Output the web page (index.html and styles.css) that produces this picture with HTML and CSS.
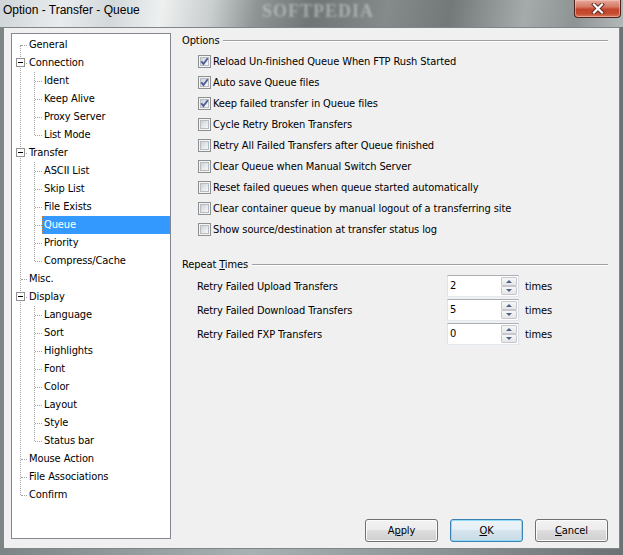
FILE: index.html
```html
<!DOCTYPE html>
<html>
<head>
<meta charset="utf-8">
<title>Option - Transfer - Queue</title>
<link rel="stylesheet" href="styles.css">
</head>
<body>
<div class="window">
  <div class="titlebar">
    <span class="title">Option - Transfer - Queue</span>
    <span class="watermark">SOFTPEDIA</span>
    <span class="close">
      <svg width="14" height="11" viewBox="0 0 14 11"><path d="M3 1.5 L11 9.5 M11 1.5 L3 9.5" stroke="#5a2a22" stroke-width="4" stroke-linecap="square"/><path d="M3 1.5 L11 9.5 M11 1.5 L3 9.5" stroke="#ffffff" stroke-width="2.2" stroke-linecap="square"/></svg>
    </span>
  </div>
  <div class="client">
    <div class="tree">
      <ul class="root">
        <li><span class="row">General</span></li>
        <li><span class="exp"></span><span class="row">Connection</span>
          <ul class="children">
            <li><span class="row">Ident</span></li>
            <li><span class="row">Keep Alive</span></li>
            <li><span class="row">Proxy Server</span></li>
            <li><span class="row">List Mode</span></li>
          </ul>
        </li>
        <li><span class="exp"></span><span class="row">Transfer</span>
          <ul class="children">
            <li><span class="row">ASCII List</span></li>
            <li><span class="row">Skip List</span></li>
            <li><span class="row">File Exists</span></li>
            <li><span class="row selected">Queue</span></li>
            <li><span class="row">Priority</span></li>
            <li><span class="row">Compress/Cache</span></li>
          </ul>
        </li>
        <li><span class="row">Misc.</span></li>
        <li><span class="exp"></span><span class="row">Display</span>
          <ul class="children">
            <li><span class="row">Language</span></li>
            <li><span class="row">Sort</span></li>
            <li><span class="row">Highlights</span></li>
            <li><span class="row">Font</span></li>
            <li><span class="row">Color</span></li>
            <li><span class="row">Layout</span></li>
            <li><span class="row">Style</span></li>
            <li><span class="row">Status bar</span></li>
          </ul>
        </li>
        <li><span class="row">Mouse Action</span></li>
        <li><span class="row">File Associations</span></li>
        <li><span class="row">Confirm</span></li>
      </ul>
    </div>
    <div class="pane">
      <div class="group-head"><span>Options</span></div>
      <div class="checks">
        <div class="check"><span class="box checked"><svg width="13" height="13" viewBox="0 0 13 13"><path d="M3.3 6.2 L5.4 9 L9.8 3.2" fill="none" stroke="#4b5c95" stroke-width="1.9"/></svg></span><span>Reload Un-finished Queue When FTP Rush Started</span></div>
        <div class="check"><span class="box checked"><svg width="13" height="13" viewBox="0 0 13 13"><path d="M3.3 6.2 L5.4 9 L9.8 3.2" fill="none" stroke="#4b5c95" stroke-width="1.9"/></svg></span><span>Auto save Queue files</span></div>
        <div class="check"><span class="box checked"><svg width="13" height="13" viewBox="0 0 13 13"><path d="M3.3 6.2 L5.4 9 L9.8 3.2" fill="none" stroke="#4b5c95" stroke-width="1.9"/></svg></span><span>Keep failed transfer in Queue files</span></div>
        <div class="check"><span class="box"></span><span>Cycle Retry Broken Transfers</span></div>
        <div class="check"><span class="box"></span><span>Retry All Failed Transfers after Queue finished</span></div>
        <div class="check"><span class="box"></span><span>Clear Queue when Manual Switch Server</span></div>
        <div class="check"><span class="box"></span><span>Reset failed queues when queue started automatically</span></div>
        <div class="check"><span class="box"></span><span>Clear container queue by manual logout of a transferring site</span></div>
        <div class="check"><span class="box"></span><span>Show source/destination at transfer status log</span></div>
      </div>
      <div class="group-head repeat"><span>Repeat <u>T</u>imes</span></div>
      <div class="spins">
        <div class="spin-row"><span class="spin-label">Retry Failed Upload Transfers</span><span class="spin"><span class="val">2</span><span class="arrows"><span class="arr up"></span><span class="arr down"></span></span></span><span class="unit">times</span></div>
        <div class="spin-row"><span class="spin-label">Retry Failed Download Transfers</span><span class="spin"><span class="val">5</span><span class="arrows"><span class="arr up"></span><span class="arr down"></span></span></span><span class="unit">times</span></div>
        <div class="spin-row"><span class="spin-label">Retry Failed FXP Transfers</span><span class="spin"><span class="val">0</span><span class="arrows"><span class="arr up"></span><span class="arr down"></span></span></span><span class="unit">times</span></div>
      </div>
      <div class="buttons">
        <span class="btn">A<u>p</u>ply</span>
        <span class="btn default"><u>O</u>K</span>
        <span class="btn"><u>C</u>ancel</span>
      </div>
    </div>
  </div>
</div>
</body>
</html>
```
FILE: styles.css
```css
* { box-sizing: border-box; }
html, body { margin: 0; padding: 0; }
body {
  width: 623px;
  height: 555px;
  overflow: hidden;
  font-family: "DejaVu Sans Condensed", "Liberation Sans", sans-serif;
  font-size: 11px;
  letter-spacing: -0.1px;
  color: #000;
  background: linear-gradient(90deg, #7c8486 0%, #a9b0b2 40%, #8d9496 70%, #6c7273 100%);
}
.window {
  display: flex;
  flex-direction: column;
  height: 555px;
}
.titlebar {
  position: relative;
  height: 27px;
  display: flex;
  align-items: flex-start;
  overflow: hidden;
  background: linear-gradient(100deg, #cfd5d8 0%, #e9ecee 10%, #d3d8da 18%, #eef0f0 26%, #c8cdcd 34%, #8f9595 41%, #6f7575 50%, #858b8b 62%, #737979 72%, #a5abab 84%, #8e9494 92%, #b2b7b7 100%);
}
.title {
  font-family: "Liberation Sans", sans-serif;
  font-size: 12px;
  letter-spacing: 0;
  line-height: 14px;
  padding: 3px 0 0 3px;
  color: #000;
}
.watermark {
  position: absolute;
  left: 262px;
  top: 1px;
  font-family: "Liberation Serif", serif;
  font-weight: bold;
  font-size: 18px;
  line-height: 20px;
  letter-spacing: 1px;
  color: rgba(215, 220, 220, 0.5);
  filter: blur(0.8px);
}
.close {
  margin: 0 2px 0 auto;
  width: 47px;
  height: 18px;
  border: 1px solid #4f2019;
  border-top: none;
  border-radius: 0 0 4px 4px;
  background: linear-gradient(#e6a99a 0%, #d67a66 40%, #c4432c 55%, #c64b30 80%, #d77a5c 100%);
  box-shadow: inset 0 0 0 1px rgba(255, 210, 200, 0.5);
  display: flex;
  align-items: center;
  justify-content: center;
}
.client {
  height: 522px;
  margin: 0 3px;
  border: 1px solid #7f8588;
  background: #f0f0f0;
  display: flex;
}
.tree {
  margin: 5px 0 0 7px;
  width: 160px;
  height: 506px;
  border: 1px solid #828790;
  background: #fff;
  padding-top: 2px;
}
.tree ul {
  list-style: none;
  margin: 0;
  padding: 0;
  position: relative;
}
.tree li { position: relative; }
.row {
  display: block;
  height: 18px;
  line-height: 18px;
  white-space: nowrap;
  margin-left: 15px;
  padding-left: 2px;
}
.children .row { margin-left: 30px; }
.root::before {
  content: "";
  position: absolute;
  left: 8px;
  top: 9px;
  bottom: 9px;
  border-left: 1px dotted #a3a3a3;
}
.root > li::before {
  content: "";
  position: absolute;
  left: 9px;
  top: 9px;
  width: 6px;
  border-top: 1px dotted #a3a3a3;
}
.children::before {
  content: "";
  position: absolute;
  left: 22px;
  top: 0;
  bottom: 9px;
  border-left: 1px dotted #a3a3a3;
}
.children > li::before {
  content: "";
  position: absolute;
  left: 23px;
  top: 9px;
  width: 7px;
  border-top: 1px dotted #a3a3a3;
}
.exp {
  position: absolute;
  left: 4px;
  top: 4px;
  width: 9px;
  height: 9px;
  border: 1px solid #919191;
  background: #fff;
  z-index: 1;
}
.exp::after {
  content: "";
  position: absolute;
  left: 1px;
  top: 3px;
  width: 5px;
  height: 1px;
  background: #000;
}
.row.selected {
  background: #3399ff;
  color: #fff;
  outline: 1px dotted #cc7a2a;
  outline-offset: -1px;
}
.pane {
  flex: 1;
  display: flex;
  flex-direction: column;
  padding: 6px 11px 6px 11px;
}
.group-head {
  display: flex;
  align-items: center;
  height: 13px;
  line-height: 13px;
}
.group-head::after {
  content: "";
  flex: 1;
  margin-left: 4px;
  border-top: 1px solid #a0a0a0;
  border-bottom: 1px solid #ffffff;
}
.checks {
  margin-top: 4px;
  padding-left: 16px;
}
.check {
  display: flex;
  align-items: center;
  height: 21px;
  gap: 2px;
  white-space: nowrap;
}
.box {
  position: relative;
  width: 13px;
  height: 13px;
  flex: none;
  border: 1px solid #8e8f8f;
  background: #f4f4f4;
}
.box::before {
  content: "";
  position: absolute;
  left: 1px;
  top: 1px;
  right: 1px;
  bottom: 1px;
  border: 1px solid #b7bcc2;
  background: linear-gradient(135deg, #cdd1d6 0%, #e8e9eb 60%, #f7f7f7 100%);
}
.box svg {
  position: absolute;
  left: -1px;
  top: -1px;
}
.group-head.repeat { margin-top: 18px; }
.spins { margin-top: 4px; }
.spin-row {
  display: flex;
  align-items: center;
  height: 22px;
  margin-bottom: 2px;
  padding-left: 15px;
  white-space: nowrap;
}
.spin-label { width: 250px; }
.spin {
  width: 72px;
  height: 22px;
  display: flex;
  border: 1px solid;
  border-color: #abadb3 #dbdfe6 #e3e9ef #e2e3ea;
  background: #fff;
}
.val {
  flex: 1;
  padding-left: 2px;
  line-height: 20px;
}
.arrows {
  width: 17px;
  display: flex;
  flex-direction: column;
  padding: 1px 1px 1px 0;
  gap: 0;
}
.arr {
  flex: 1;
  border: 1px solid #c5c8ce;
  border-radius: 1px;
  background: linear-gradient(#f7f7f7, #e6e6e6);
  display: flex;
  align-items: center;
  justify-content: center;
}
.arr::after {
  content: "";
  width: 0;
  height: 0;
  border-left: 3px solid transparent;
  border-right: 3px solid transparent;
}
.arr.up::after { border-bottom: 3px solid #4d5f8a; }
.arr.down::after { border-top: 3px solid #4d5f8a; }
.unit { margin-left: 6px; }
.buttons {
  margin-top: auto;
  display: flex;
  justify-content: flex-end;
  gap: 12px;
}
.btn {
  width: 73px;
  height: 23px;
  border: 1px solid #707070;
  border-radius: 3px;
  background: linear-gradient(#f2f2f2 0%, #ebebeb 50%, #dddddd 50%, #cfcfcf 100%);
  box-shadow: inset 0 0 0 1px #fbfbfb;
  display: flex;
  align-items: center;
  justify-content: center;
  line-height: 21px;
}
.btn.default {
  border-color: #3c7fb1;
  background: linear-gradient(#eef5f9 0%, #e4eef4 50%, #d6e5ee 50%, #c9dbe7 100%);
  box-shadow: inset 0 0 0 1px #8fdcf9;
}
u { text-decoration: underline; text-underline-offset: 1px; }
```
